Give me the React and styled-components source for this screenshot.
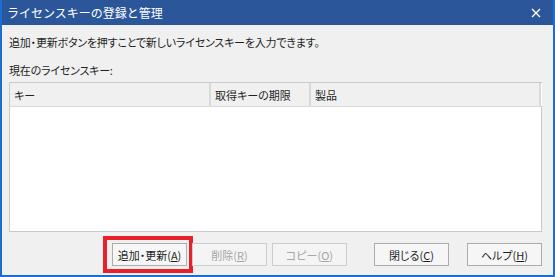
import React from 'react';
import styled, { createGlobalStyle } from 'styled-components';

const GlobalStyle = createGlobalStyle`
  html, body {
    margin: 0;
    padding: 0;
    background: #f0f0f0;
  }
`;

const jp = `"Noto Sans CJK JP", "Noto Sans", sans-serif`;

export const Window = styled.div`
  box-sizing: border-box;
  width: 555px;
  height: 277px;
  display: flex;
  flex-direction: column;
  background: #f0f0f0;
  border: 2px solid #1a6ed6;
  border-top: 0;
  font-family: ${jp};
  color: #1f1f1f;
  overflow: hidden;
`;

export const TitleBar = styled.div`
  height: 25px;
  flex: none;
  display: flex;
  align-items: center;
  justify-content: space-between;
  background: #2b579a;
  color: #fff;
  padding: 0 12px 0 5px;
  font-size: 12px;
`;

export const Title = styled.span`
  line-height: 16px;
`;

export const Body = styled.div`
  display: flex;
  flex-direction: column;
  padding: 0 11px 0 7px;
  font-size: 11px;
  font-feature-settings: "palt";
`;

export const Line = styled.div`
  line-height: 16px;
  margin-top: ${(p) => p.$top}px;
  letter-spacing: -0.2px;
`;

export const ListBox = styled.div`
  margin-top: 4px;
  height: 150px;
  box-sizing: border-box;
  border: 1px solid #c9c9c9;
  background: #fff;
  display: flex;
  flex-direction: column;
`;

export const HeaderRow = styled.div`
  display: flex;
  height: 24px;
  background: #f0f0f0;
  border-bottom: 1px solid #d9d9d9;
  box-sizing: border-box;
`;

export const HeaderCell = styled.div`
  box-sizing: border-box;
  width: ${(p) => p.$w}px;
  flex: none;
  display: flex;
  align-items: center;
  padding-left: 4px;
  border-right: 2px solid #d9d9d9;
  line-height: 16px;
`;

export const HeaderRest = styled.div`
  flex: 1;
  border-left: 1px solid #ffffff;
`;

export const ButtonRow = styled.div`
  display: flex;
  margin-top: 11px;
  padding-left: 103px;
`;

export const Button = styled.button`
  position: relative;
  box-sizing: border-box;
  width: 75px;
  height: 23px;
  margin-left: ${(p) => p.$gap || 0}px;
  padding: 0;
  border: 1px solid ${(p) => (p.disabled ? '#cccccc' : '#adadad')};
  background: ${(p) => (p.disabled ? '#f4f4f4' : '#f6f6f6')};
  color: ${(p) => (p.disabled ? '#a6a6a6' : '#1f1f1f')};
  font-family: ${jp};
  font-size: 11px;
  font-feature-settings: "palt";
  line-height: 16px;
  text-align: center;
`;

export const Highlight = styled.span`
  position: absolute;
  left: -10px;
  top: -8px;
  width: 90px;
  height: 37px;
  box-sizing: border-box;
  border: 4px solid #e8202a;
  pointer-events: none;
`;

const CloseIcon = () => (
  <svg width="10" height="10" viewBox="0 0 10 10">
    <path d="M1 1 L9 9 M9 1 L1 9" stroke="#fff" strokeWidth="1.4" />
  </svg>
);

export default function App() {
  return (
    <>
      <GlobalStyle />
      <Window>
        <TitleBar>
          <Title>ライセンスキーの登録と管理</Title>
          <CloseIcon />
        </TitleBar>
        <Body>
          <Line $top={9}>追加・更新ボタンを押すことで新しいライセンスキーを入力できます。</Line>
          <Line $top={12}>現在のライセンスキー:</Line>
          <ListBox>
            <HeaderRow>
              <HeaderCell $w={201}>キー</HeaderCell>
              <HeaderCell $w={100}>取得キーの期限</HeaderCell>
              <HeaderCell $w={230}>製品</HeaderCell>
              <HeaderRest />
            </HeaderRow>
          </ListBox>
          <ButtonRow>
            <Button>
              追加・更新(<u>A</u>)
              <Highlight />
            </Button>
            <Button $gap={5} disabled>
              削除(<u>R</u>)
            </Button>
            <Button $gap={5} disabled>
              コピー(<u>O</u>)
            </Button>
            <Button $gap={27}>
              閉じる(<u>C</u>)
            </Button>
            <Button $gap={18}>
              ヘルプ(<u>H</u>)
            </Button>
          </ButtonRow>
        </Body>
      </Window>
    </>
  );
}
